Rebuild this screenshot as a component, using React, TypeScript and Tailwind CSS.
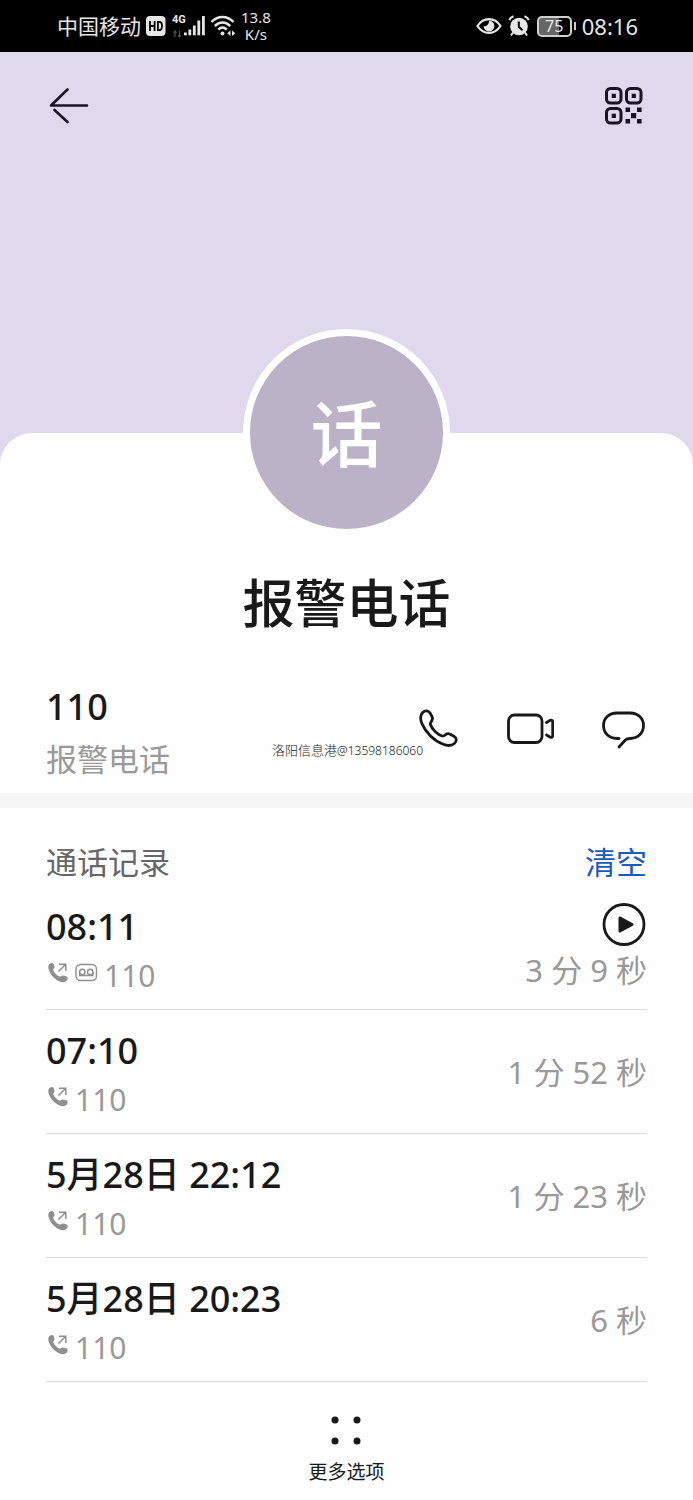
import type { ReactNode } from "react";

type Call = { time: string; duration: string; recorded?: boolean };

const calls: Call[] = [
  { time: "08:11", duration: "3 分 9 秒", recorded: true },
  { time: "07:10", duration: "1 分 52 秒" },
  { time: "5月28日 22:12", duration: "1 分 23 秒" },
  { time: "5月28日 20:23", duration: "6 秒" },
];

function StatusBar() {
  return (
    <div className="flex h-[52px] items-center justify-between bg-black pr-[55px] pl-[57px] text-[22px] text-[#e6e6e6]">
      <div className="flex items-center">
        <span className="text-[21px] leading-8">中国移动</span>
        <svg className="ml-[5px] h-5 w-5" viewBox="0 0 20 20" aria-hidden="true">
          <rect x="0" y="0" width="19.500" height="20" rx="4" fill="#e6e6e6" />
          <path d="M4 5v10M8.600 5v10M4 10h4.600M11.900 5.900h1.400c2 0 2.700 1.400 2.700 4.100s-.7 4.100-2.700 4.100h-1.400z" fill="none" stroke="#000" strokeWidth="1.800" />
        </svg>
        <div className="ml-[6px] flex h-6 items-end">
          <div className="flex h-6 w-3 flex-col justify-between">
            <span className="font-['Roboto'] text-[11px] leading-3 font-bold">4G</span>
            <svg className="h-2 w-3" viewBox="0 0 12 8" fill="none" stroke="#555" strokeWidth="1.200" aria-hidden="true">
              <path d="M3 7V1M1.400 2.600L3 1l1.600 1.600M7.500 1v6M6 5.400L7.500 7l1.600-1.600" />
            </svg>
          </div>
          <svg className="h-6 w-[22px]" viewBox="0 0 22 24" fill="#e6e6e6" aria-hidden="true">
            <rect x="0" y="18.500" width="2.800" height="2.800" />
            <rect x="4.400" y="15.500" width="2.800" height="5.800" />
            <rect x="8.900" y="11.500" width="2.800" height="9.800" />
            <rect x="13.400" y="6.500" width="2.800" height="14.800" />
            <rect x="18" y="2" width="2.800" height="19.300" />
          </svg>
        </div>
        <svg className="ml-1 h-6 w-[26px]" viewBox="0 0 26 24" fill="none" stroke="#e6e6e6" strokeWidth="2.500" aria-hidden="true">
          <path d="M1.500 8C8 1.300 17 1.300 23.500 8M4.800 12c4.600-4.600 10.800-4.600 15.400 0M8.300 15.500c2.700-2.500 5.700-2.500 8.400 0" />
          <circle cx="12.500" cy="19.500" r="2" fill="#e6e6e6" stroke="none" />
          <path d="M20.500 16.500v5.500l-3.300-2.700zM22 16.500v5.500l3.300-2.700z" fill="#e6e6e6" stroke="none" />
        </svg>
        <div className="ml-[5px] text-center text-[15px] leading-[17px]">
          <div>13.8</div>
          <div>K/s</div>
        </div>
      </div>
      <div className="flex items-center">
        <svg className="h-[18px] w-[26px]" viewBox="0 0 26 18" fill="none" stroke="#e6e6e6" strokeWidth="2.200" aria-hidden="true">
          <path d="M1.500 9C7.500-.2 18.500-.2 24.500 9 18.500 18.200 7.500 18.200 1.500 9z" />
          <path d="M13 3.600a5.400 5.400 0 1 1-5.400 5.400c2.600 1.200 5.600-1.600 5.400-5.400z" fill="#e6e6e6" stroke="none" />
        </svg>
        <svg className="ml-[6px] h-[22px] w-[22px]" viewBox="0 0 22 22" fill="none" aria-hidden="true">
          <circle cx="11" cy="11.500" r="8.800" fill="#e6e6e6" />
          <path d="M1.200 5C2 3.200 3.500 1.900 5.500 1.200M20.800 5C20 3.200 18.500 1.900 16.500 1.200M5 17.500l-2 3M17 17.500l2 3" stroke="#e6e6e6" strokeWidth="2" />
          <path d="M10.800 6.500v5.200l3.800 3.500" stroke="#000" strokeWidth="2" />
        </svg>
        <div className="ml-[7px] flex items-center gap-[2px]">
          <div className="flex h-[21px] w-[35px] items-center justify-center rounded-[5px] border-2 border-[#cfcfcf] bg-linear-to-r from-[#666] from-65% to-black to-65% text-base leading-none">
            75
          </div>
          <div className="h-2 w-[2px] bg-[#cfcfcf]" />
        </div>
        <span className="ml-[6px] leading-8">08:16</span>
      </div>
    </div>
  );
}

function IconButton({ label, children }: { label: string; children: ReactNode }) {
  return (
    <button type="button" aria-label={label} className="flex size-12 items-center justify-center">
      {children}
    </button>
  );
}

function Handset() {
  return (
    <svg className="size-[22px]" viewBox="0 0 22 22" aria-hidden="true">
      <path
        d="M3 1.600C4.600.6 6.500 1 7 2.800l.5 2c.3 1.500-1.400 2-1.300 3.300.8 2.700 3.400 5.400 6.300 6.500 1.300.3 2-1.500 3.600-1.100l3 .8c1.900.6 2 2.700.8 4.200-1.500 1.800-4 2.100-6.500 1.300C8 17.900 3.300 13 1.700 7.500 1 5 1.200 2.900 3 1.600z"
        fill="#8f8f8f"
      />
      <path d="M11.500 9.500l6.500-6.500M12 2.200h6.800V9" fill="none" stroke="#8f8f8f" strokeWidth="1.500" />
    </svg>
  );
}

function Voicemail() {
  return (
    <svg className="h-[22px] w-[23px]" viewBox="0 0 23 22" fill="none" stroke="#8f8f8f" strokeWidth="1.400" aria-hidden="true">
      <rect x="1" y="2.500" width="20.500" height="16" rx="4.500" />
      <circle cx="7.300" cy="10" r="2.700" />
      <circle cx="15.200" cy="10" r="2.700" />
      <path d="M4.600 10v3.500h13.300V10" />
    </svg>
  );
}

function CallRow({ call }: { call: Call }) {
  return (
    <li className="flex h-[124px] items-center justify-between border-b border-[#d9d9d9]">
      <div className="pt-[7px]">
        <div className="text-4xl leading-[48px] font-medium text-[#191919]">{call.time}</div>
        <div className="flex h-12 items-center gap-[6px] pl-px text-[30px] text-[#999]">
          <span className="flex gap-[6px] pb-1">
            <Handset />
            {call.recorded && <Voicemail />}
          </span>
          <span>110</span>
        </div>
      </div>
      <div className="flex flex-col items-end">
        {call.recorded && (
          <button type="button" aria-label="播放录音">
            <svg className="size-[45px]" viewBox="0 0 45 45" aria-hidden="true">
              <circle cx="22" cy="22.500" r="20" fill="none" stroke="#191919" strokeWidth="2.800" />
              <path d="M18 16v13l12-6.500z" fill="#191919" stroke="#191919" strokeWidth="3" strokeLinejoin="round" />
            </svg>
          </button>
        )}
        <span className="text-[31px] leading-[46px] text-[#999]">{call.duration}</span>
      </div>
    </li>
  );
}

export default function App() {
  return (
    <div className="min-h-screen bg-[#e0d9ed] font-['Noto_Sans','Noto_Sans_CJK_SC',sans-serif] text-[#191919]">
      <StatusBar />
      <header className="flex h-[381px] items-start justify-between px-[45px] pt-[30px]">
        <IconButton label="返回">
          <svg className="h-10 w-10" viewBox="0 0 40 40" fill="none" stroke="#191424" strokeWidth="2.600" strokeLinecap="round" aria-hidden="true">
            <path d="M38 19.500H2L18.500 3.500M5.500 24L18.500 36" strokeLinejoin="round" />
          </svg>
        </IconButton>
        <IconButton label="二维码">
          <svg className="size-[38px]" viewBox="0 0 38 38" aria-hidden="true">
            <g fill="none" stroke="#191424" strokeWidth="3">
              <rect x="1.500" y="1.500" width="14.500" height="14.500" rx="4" />
              <rect x="21.500" y="1.500" width="14.500" height="14.500" rx="4" />
              <rect x="1.500" y="21.500" width="14.500" height="14.500" rx="4" />
            </g>
            <path
              fill="#191424"
              d="M6.700 6.700h4.200v4.200H6.700zM26.700 6.700h4.200v4.200h-4.200zM6.700 26.700h4.200v4.200H6.700zM20.500 20.500h4.600v4.600h-4.600zM32 20.500h4.600v4.600H32zM26 26h5.200v5.200H26zM20.500 32h4.600v4.600h-4.600zM32 32h4.600v4.600H32z"
            />
          </svg>
        </IconButton>
      </header>

      <main className="rounded-t-[32px] bg-[#fefefe]">
        <section className="flex flex-col items-center">
          <div className="-mt-[104px] flex size-[207px] items-center justify-center rounded-full border-[7px] border-[#fefefe] bg-[#bbb2c8] text-7xl font-medium text-white">
            话
          </div>
          <h1 className="mt-[27px] text-[52px] leading-[80px] font-medium">报警电话</h1>
        </section>

        <section className="relative flex h-[150px] items-center justify-between pr-[46px] pl-[46px]">
          <div className="pt-[29px]">
            <div className="text-4xl leading-[52px] font-medium">110</div>
            <div className="text-[31px] leading-[52px] text-[#999]">报警电话</div>
          </div>
          <div className="flex gap-[45px] pt-[21px]">
            <IconButton label="拨打电话">
              <svg className="size-12" viewBox="0 0 48 48" fill="none" stroke="#191919" strokeWidth="2.800" strokeLinejoin="round" aria-hidden="true">
                <path d="M9.500 7.700C12 5 15.600 5.400 17.200 8.300l1.900 3.400c1.900 3.700-2.500 5.100-1.700 7.800 1.200 4.200 7.700 10.500 11.700 11.500 2.900.7 4-3.600 7.500-2l4.300 2.200c3.200 1.700 3 5.100.5 7.300-3.100 2.500-7.200 2.400-11.200.8C21 36 12.800 27.500 8.900 18.600 7.300 14.800 6.900 10.800 9.500 7.700z" />
              </svg>
            </IconButton>
            <IconButton label="视频通话">
              <svg className="size-12" viewBox="0 0 48 48" fill="none" stroke="#191919" strokeWidth="2.800" strokeLinecap="round" strokeLinejoin="round" aria-hidden="true">
                <rect x="2.500" y="10" width="33.500" height="27.500" rx="6" />
                <path d="M40.500 17.500l3.800-2.200q2.400-.9 2.400 1.700v13.500q0 2.600-2.400 1.700l-3.800-2.200" />
              </svg>
            </IconButton>
            <IconButton label="发送信息">
              <svg className="size-12" viewBox="0 0 48 48" fill="none" stroke="#191919" strokeWidth="2.800" strokeLinecap="round" strokeLinejoin="round" aria-hidden="true">
                <path d="M20 33.500h-2C10 33.500 4.500 28 4.500 20.500S10 8 18 8h13c8 0 13.500 5 13.500 12.500S39 33.500 31 33.500c-2.500 0-3.300.2-4.600 1.500L20 42" />
              </svg>
            </IconButton>
          </div>
          <p className="absolute top-[97px] left-[272px] text-[13px] leading-5 font-light text-[#222]">
            洛阳信息港<span className="text-xs">@13598186060</span>
          </p>
        </section>

        <div className="h-[15px] bg-[#f6f6f6]" />

        <section className="px-[46px]">
          <div className="flex h-[78px] items-end justify-between text-[31px] leading-[48px]">
            <h2 className="text-[#666]">通话记录</h2>
            <button type="button" className="text-[#1a5bbd]">清空</button>
          </div>
          <ul>
            {calls.map((call) => (
              <CallRow key={call.time} call={call} />
            ))}
          </ul>
        </section>

        <nav className="flex justify-center pt-8 pb-4">
          <button type="button" className="flex flex-col items-center text-[19px] leading-7">
            <svg className="h-8 w-8" viewBox="0 0 32 32" fill="#191919" aria-hidden="true">
              <circle cx="5" cy="6" r="3.500" />
              <circle cx="27" cy="6" r="3.500" />
              <circle cx="5" cy="27" r="3.500" />
              <circle cx="27" cy="27" r="3.500" />
            </svg>
            <span className="mt-3">更多选项</span>
          </button>
        </nav>
      </main>
    </div>
  );
}
